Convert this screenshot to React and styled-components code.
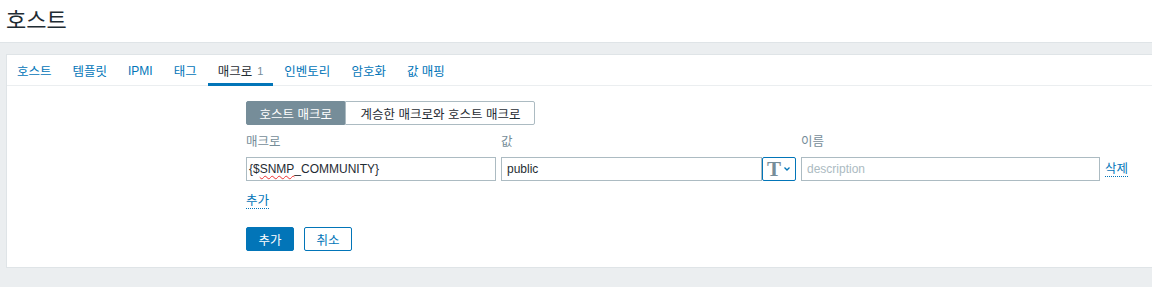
import styled, { createGlobalStyle } from 'styled-components';

const GlobalStyle = createGlobalStyle`
  html, body {
    margin: 0;
    padding: 0;
    background: #ebeef0;
  }
  body {
    font-family: "Liberation Sans", Arial, "Noto Sans CJK KR", sans-serif;
    font-size: 12.5px;
    color: #1f2c33;
  }
`;

const tabs = [
  { label: '호스트' },
  { label: '템플릿' },
  { label: 'IPMI', latin: true },
  { label: '태그' },
  { label: '매크로', count: 1, active: true },
  { label: '인벤토리' },
  { label: '암호화' },
  { label: '값 매핑' },
];

const App = () => {
  return (
    <>
      <GlobalStyle />
      <Header>
        <Title>호스트</Title>
      </Header>
      <Main>
        <Panel>
          <TabList>
            {tabs.map((tab) => (
              <Tab key={tab.label} active={tab.active} latin={tab.latin}>
                {tab.label}
                {tab.count && <Count>{tab.count}</Count>}
              </Tab>
            ))}
          </TabList>
          <Body>
            <Segmented>
              <SegButton selected>호스트 매크로</SegButton>
              <SegButton>계승한 매크로와 호스트 매크로</SegButton>
            </Segmented>
            <MacroGrid>
              <Label>매크로</Label>
              <Label>값</Label>
              <Label>이름</Label>
              <span />
              <TextBox>
                {'{$'}<Misspelled>SNMP</Misspelled>{'_COMMUNITY}'}
              </TextBox>
              <ValueGroup>
                <Input defaultValue="public" />
                <TypeButton>
                  <TGlyph>T</TGlyph>
                  <svg width="8" height="6" viewBox="0 0 8 6">
                    <path d="M1.5 1.5 L4 4 L6.5 1.5" fill="none" stroke="#0275b8" strokeWidth="1.3" />
                  </svg>
                </TypeButton>
              </ValueGroup>
              <Input placeholder="description" />
              <Link>삭제</Link>
            </MacroGrid>
            <AddRow>
              <Link>추가</Link>
            </AddRow>
            <Buttons>
              <Button primary>추가</Button>
              <Button>취소</Button>
            </Buttons>
          </Body>
        </Panel>
      </Main>
    </>
  );
};

const Header = styled.header`
  display: flex;
  align-items: center;
  height: 42px;
  padding: 0 6px;
  background: #fff;
  border-bottom: 1px solid #dfe4e7;
`;

const Title = styled.h1`
  margin: 0;
  margin-top: -6px;
  font-size: 22px;
  font-weight: normal;
  color: #1f2c33;
`;

const Main = styled.main`
  padding: 11px 0 20px 6px;
`;

const Panel = styled.section`
  background: #fff;
  border: 1px solid #dfe4e7;
  border-right: none;
`;

const TabList = styled.nav`
  display: flex;
  height: 30px;
  border-bottom: 1px solid #ebeef0;
`;

const Tab = styled.div`
  display: flex;
  align-items: center;
  gap: 5px;
  padding: 3px 10px 0;
  margin-right: 1px;
  margin-bottom: -1px;
  height: 31px;
  box-sizing: border-box;
  font-size: ${({ latin }) => (latin ? '12px' : '12.5px')};
  color: ${({ active }) => (active ? '#1f2c33' : '#0275b8')};
  border-bottom: 3px solid ${({ active }) => (active ? '#0275b8' : 'transparent')};
`;

const Count = styled.span`
  color: #768d99;
  font-size: 11px;
`;

const Body = styled.div`
  padding: 15px 0 16px 239px;
`;

const Segmented = styled.div`
  display: inline-flex;
  height: 24px;
`;

const SegButton = styled.div`
  display: flex;
  align-items: center;
  padding: ${({ selected }) => (selected ? '0 12.5px' : '0 14px')};
  box-sizing: border-box;
  height: 24px;
  background: ${({ selected }) => (selected ? '#768d99' : '#fff')};
  color: ${({ selected }) => (selected ? '#fff' : '#1f2c33')};
  border: 1px solid ${({ selected }) => (selected ? '#768d99' : '#acbbc2')};
  border-radius: ${({ selected }) => (selected ? '2px 0 0 2px' : '0 2px 2px 0')};
`;

const MacroGrid = styled.div`
  display: grid;
  grid-template-columns: 250px 295px 299px auto;
  column-gap: 5px;
  row-gap: 8px;
  margin-top: 10px;
  align-items: center;
`;

const Label = styled.div`
  color: #768d99;
  line-height: 14px;
`;

const fieldBase = `
  height: 24px;
  box-sizing: border-box;
  border: 1px solid #acbbc2;
  padding: 0 5px;
  font-family: "Liberation Sans", Arial, "Noto Sans CJK KR", sans-serif;
  font-size: 12px;
  color: #1f2c33;
  background: #fff;
  outline: none;
`;

const TextBox = styled.div`
  ${fieldBase}
  padding: 0 2px;
  display: flex;
  align-items: center;
  white-space: pre;
`;

const Misspelled = styled.span`
  text-decoration: underline wavy #e33;
  text-decoration-thickness: 1px;
  text-underline-offset: 2px;
`;

const Input = styled.input`
  ${fieldBase}
  width: 100%;
  min-width: 0;
  &::placeholder {
    color: #acbbc2;
  }
`;

const ValueGroup = styled.div`
  display: flex;
`;

const TypeButton = styled.div`
  flex: 0 0 34px;
  height: 24px;
  box-sizing: border-box;
  border: 1px solid #0275b8;
  border-radius: 2px;
  display: flex;
  align-items: center;
  justify-content: center;
  gap: 2px;
  background: #fff;
`;

const TGlyph = styled.span`
  font-family: "Liberation Serif", "Times New Roman", serif;
  font-weight: bold;
  font-size: 21px;
  line-height: 1;
  color: #768d99;
`;

const Link = styled.span`
  justify-self: start;
  color: #0275b8;
  border-bottom: 1px dotted #0275b8;
  line-height: 14px;
  cursor: pointer;
`;

const AddRow = styled.div`
  margin-top: 13px;
`;

const Buttons = styled.div`
  display: flex;
  gap: 10px;
  margin-top: 19px;
`;

const Button = styled.button`
  width: 48px;
  height: 24px;
  padding: 0;
  border-radius: 2px;
  border: 1px solid #0275b8;
  background: ${({ primary }) => (primary ? '#0275b8' : '#fff')};
  color: ${({ primary }) => (primary ? '#fff' : '#0275b8')};
  font-family: "Liberation Sans", Arial, "Noto Sans CJK KR", sans-serif;
  font-size: 12.5px;
  cursor: pointer;
`;

export default App;
